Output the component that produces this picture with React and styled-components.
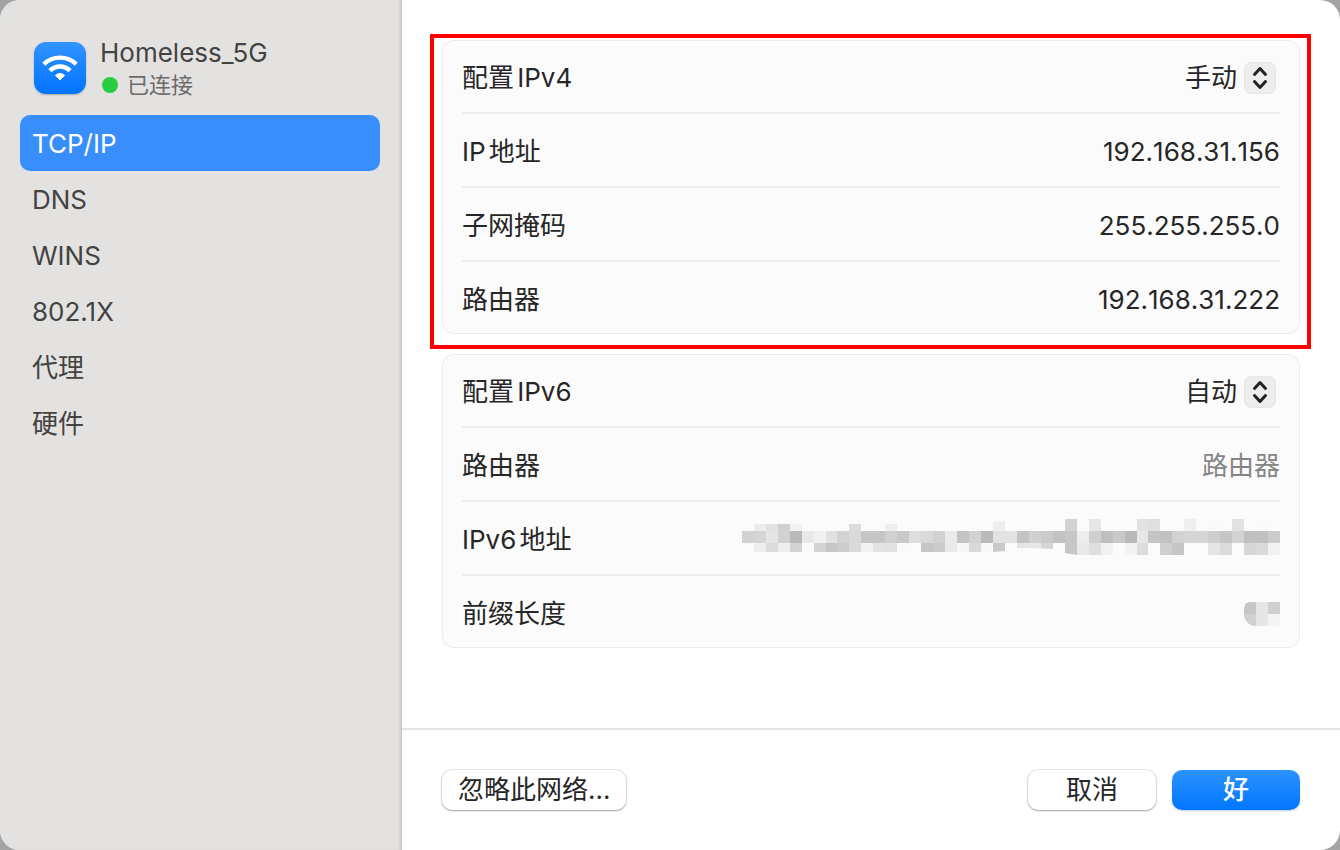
import React, { useState } from 'react';
import styled, { createGlobalStyle } from 'styled-components';

const GlobalStyle = createGlobalStyle`
  * {
    box-sizing: border-box;
  }

  body {
    margin: 0;
    background: #a3a3a3;
    font-family: Inter, 'Noto Sans CJK SC', sans-serif;
    font-size: 26px;
    line-height: 32px;
    color: #262626;
    text-autospace: normal;
  }

  button,
  input,
  select {
    font: inherit;
    color: inherit;
  }
`;

const Window = styled.div`
  display: flex;
  min-height: 100vh;
  border-radius: 20px;
  overflow: hidden;
  background: #fff;
`;

const Sidebar = styled.aside`
  flex: 0 0 402px;
  padding: 37px 21px 20px 20px;
  background: #e3e2e0;
  border-right: 1px solid #c6c5c4;
  box-shadow: inset -2px 0 2px rgba(0, 0, 0, 0.06);
  color: #434342;
`;

const Network = styled.header`
  display: flex;
  gap: 14px;
  padding: 0 14px;
  margin-bottom: 14px;
`;

const WifiBadge = styled.div`
  display: flex;
  align-items: center;
  justify-content: center;
  width: 52px;
  height: 52px;
  margin-top: 5px;
  border-radius: 12px;
  background: linear-gradient(#3294ff, #0073ff);
  box-shadow: 0 1px 2px rgba(0, 0, 0, 0.25);
`;

const NetworkName = styled.h1`
  margin: 0;
  font-size: 26px;
  font-weight: 400;
  line-height: 32px;
`;

const Status = styled.p`
  display: flex;
  align-items: center;
  gap: 9px;
  margin: 0;
  padding-left: 2px;
  font-size: 22px;
  line-height: 32px;
  color: #6b6a69;
`;

const Dot = styled.span`
  width: 16px;
  height: 16px;
  border-radius: 50%;
  background: #28cd41;
`;

const Nav = styled.nav`
  display: flex;
  flex-direction: column;
`;

const NavItem = styled.button`
  height: 56px;
  padding: 2px 12px 0;
  border: 0;
  border-radius: 10px;
  text-align: left;
  background: ${({ $active }) => ($active ? '#388ffb' : 'transparent')};
  color: ${({ $active }) => ($active ? '#fff' : 'inherit')};
`;

const Main = styled.main`
  display: flex;
  flex: 1;
  flex-direction: column;
  min-width: 0;
`;

const Content = styled.div`
  display: flex;
  flex: 1;
  flex-direction: column;
  gap: 20px;
  padding: 40px;
`;

const Card = styled.section`
  position: relative;
  padding: 0 20px;
  border-radius: 12px;
  background: #fbfbfb;
  box-shadow: inset 0 0 0 1px #ececec;
`;

const Highlight = styled.div`
  position: absolute;
  inset: -6px -11px -15px -12px;
  border: 4px solid #fe0000;
  pointer-events: none;
`;

const Row = styled.div`
  display: flex;
  align-items: center;
  justify-content: space-between;
  height: 72px;
  padding-top: 4px;

  & + & {
    height: 74px;
    border-top: 2px solid #eee;
  }
`;

const Value = styled.input`
  flex: 1;
  min-width: 0;
  padding: 0;
  border: 0;
  outline: 0;
  background: transparent;
  text-align: right;
  font-kerning: none;

  &::placeholder {
    color: #858585;
    opacity: 1;
  }
`;

const Picker = styled.div`
  display: flex;
  align-items: center;
  padding-right: 4px;
`;

const Select = styled.select`
  padding: 0 38px 0 0;
  border: 0;
  outline: 0;
  appearance: none;
  background: transparent;
`;

const Stepper = styled.span`
  display: flex;
  width: 32px;
  height: 32px;
  margin-left: -32px;
  border-radius: 8px;
  background: #ededed;
  box-shadow: inset 0 0 0 1px #e6e6e6;
  pointer-events: none;
`;

const Footer = styled.footer`
  display: flex;
  align-items: center;
  gap: 16px;
  padding: 40px;
  border-top: 2px solid #e5e5e5;
`;

const Button = styled.button`
  height: 40px;
  min-width: 128px;
  padding: 0 16px;
  border: 0;
  border-radius: 10px;
  line-height: 38px;
  background: ${({ $primary }) =>
    $primary ? 'linear-gradient(#2c91ff, #0077ff)' : '#fff'};
  color: ${({ $primary }) => ($primary ? '#fff' : 'inherit')};
  font-weight: ${({ $primary }) => ($primary ? 500 : 400)};
  box-shadow: ${({ $primary }) =>
    $primary
      ? '0 1px 2px rgba(0, 60, 140, 0.25)'
      : '0 0 0 1px rgba(0, 0, 0, 0.08), 0 1px 2px rgba(0, 0, 0, 0.3)'};
`;

const Spacer = styled.div`
  flex: 1;
`;

const tabs = ['TCP/IP', 'DNS', 'WINS', '802.1X', '代理', '硬件'];

// one entry per column: upper, middle and lower shade
const addressCells = [
  '-- d2 --', 'ec d5 ee', 'e2 e5 dc', 'd0 d1 ee', 'f2 b9 d3', '-- e9 --',
  '-- f1 d3', '-- e1 c6', '-- d3 cd', 'dc d9 da', '-- c5 f3', '-- c5 e3',
  'ee d0 e1', '-- c9 fa', '-- dd --', '-- d9 c6', '-- d1 cb', '-- ea e9',
  '-- c4 f6', '-- d2 d9', '-- ba f8', 'ee e2 c9', '-- e3 --', '-- c4 e5',
  '-- d0 e6', '-- cb d5', '-- c3 --', 'd3 c7 c7', '-- ed e9', 'e6 cf df',
  '-- c0 f2', '-- c9 --', '-- b9 f3', 'e2 e7 dc', 'df c5 --', '-- c1 cf',
  '-- d2 c6', 'ef d5 --', '-- d5 --', 'fa ce e5', '-- c5 db', 'e1 d3 --',
  '-- c0 d7', 'fa c0 da', '-- cb f2',
];

const cellX = (i) => i * 12 - (i > 7 ? 1 : 0) - (i > 33 ? 1 : 0);

const HiddenAddress = () => (
  <svg width="538" height="42" role="img" aria-label="IPv6 地址">
    <defs>
      <clipPath id="addressShape">
        <path d="M0 5H251V3L263 2V0H538V36H335L323 34V36L311 30L287 29H275V33L263 32L251 33H0Z" />
      </clipPath>
    </defs>
    <g clipPath="url(#addressShape)" shapeRendering="crispEdges">
      {addressCells.map((cell, i) =>
        cell.split(' ').map(
          (shade, row) =>
            shade !== '--' && (
              <rect
                key={`${i}-${row}`}
                x={cellX(i)}
                y={row * 12}
                width={cellX(i + 1) - cellX(i)}
                height="12"
                fill={`#${shade}${shade}${shade}`}
              />
            ),
        ),
      )}
    </g>
  </svg>
);

const HiddenPrefix = () => (
  <svg width="36" height="24" role="img" aria-label="前缀长度">
    <path d="M12 0V12H0V6Q1 0 6 0Z" fill="#c6c6c6" />
    <path d="M0 12H12V24H9Q1 21 0 14Z" fill="#d0d0d0" />
    <path d="M12 0H24V24H12Z" fill="#e6e6e6" />
    <path d="M24 0H36V12H24Z" fill="#cfcfcf" />
    <path d="M24 12H36V24H24Z" fill="#f4f4f4" />
  </svg>
);

const WifiIcon = () => (
  <svg width="38" height="30" viewBox="0 0 38 30" fill="none">
    <path
      d="M2.8 11.2A23.2 23.2 0 0 1 35.2 11.2M8.9 17.6A14.4 14.4 0 0 1 29.1 17.6"
      stroke="#fff"
      strokeWidth="4.4"
    />
    <path
      d="M19 27L14.4 22.4A7.4 7.4 0 0 1 23.6 22.4Z"
      fill="#fff"
      stroke="#fff"
      strokeLinejoin="round"
    />
  </svg>
);

const PopUp = ({ id, value }) => {
  const [mode, setMode] = useState(value);

  return (
    <Picker>
      <Select id={id} value={mode} onChange={(e) => setMode(e.target.value)}>
        <option>手动</option>
        <option>自动</option>
      </Select>
      <Stepper>
        <svg width="32" height="32" fill="none">
          <path
            d="M10.5 12.5L16 6.5L21.5 12.5M10.5 19.5L16 25.5L21.5 19.5"
            stroke="#222"
            strokeWidth="3"
            strokeLinecap="round"
            strokeLinejoin="round"
          />
        </svg>
      </Stepper>
    </Picker>
  );
};

const App = () => {
  const [tab, setTab] = useState('TCP/IP');

  return (
    <>
      <GlobalStyle />
      <Window>
        <Sidebar>
          <Network>
            <WifiBadge>
              <WifiIcon />
            </WifiBadge>
            <div>
              <NetworkName>Homeless_5G</NetworkName>
              <Status>
                <Dot />
                已连接
              </Status>
            </div>
          </Network>
          <Nav>
            {tabs.map((name) => (
              <NavItem
                key={name}
                $active={name === tab}
                onClick={() => setTab(name)}
              >
                {name}
              </NavItem>
            ))}
          </Nav>
        </Sidebar>
        <Main>
          <Content>
            <Card>
              <Row>
                <label htmlFor="ipv4">配置IPv4</label>
                <PopUp id="ipv4" value="手动" />
              </Row>
              <Row>
                <label htmlFor="address">IP地址</label>
                <Value id="address" defaultValue="192.168.31.156" />
              </Row>
              <Row>
                <label htmlFor="mask">子网掩码</label>
                <Value id="mask" defaultValue="255.255.255.0" />
              </Row>
              <Row>
                <label htmlFor="router">路由器</label>
                <Value id="router" defaultValue="192.168.31.222" />
              </Row>
              <Highlight />
            </Card>
            <Card>
              <Row>
                <label htmlFor="ipv6">配置IPv6</label>
                <PopUp id="ipv6" value="自动" />
              </Row>
              <Row>
                <label htmlFor="router6">路由器</label>
                <Value id="router6" placeholder="路由器" />
              </Row>
              <Row>
                <span>IPv6地址</span>
                <HiddenAddress />
              </Row>
              <Row>
                <span>前缀长度</span>
                <HiddenPrefix />
              </Row>
            </Card>
          </Content>
          <Footer>
            <Button>忽略此网络...</Button>
            <Spacer />
            <Button>取消</Button>
            <Button $primary>好</Button>
          </Footer>
        </Main>
      </Window>
    </>
  );
};

export default App;
